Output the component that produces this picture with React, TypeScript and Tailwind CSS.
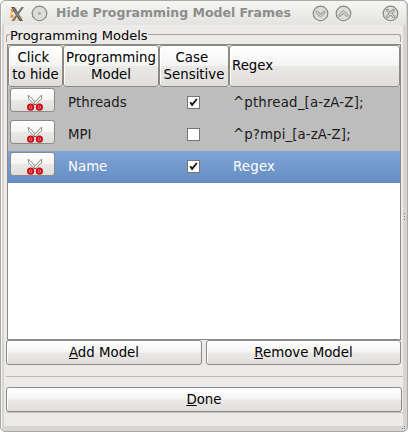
import type { ReactNode } from 'react';

const face = 'bg-[linear-gradient(#ffffff,#f4f4f3_49%,#eae9e8_51%,#dfdedc)]';

function RoundButton({ kind }: { kind: 'dot' | 'down' | 'up' | 'close' }) {
  return (
    <svg className="h-[17px] w-[17px] shrink-0" viewBox="0 0 17 17" fill="none">
      <circle cx="8.5" cy="9.1" r="7.3" stroke="#fff" strokeWidth="1.2" />
      <circle cx="8.5" cy="8.5" r="7.3" fill="#dddcda" stroke="#8b8b89" strokeWidth="1.3" />
      {kind === 'dot' && <circle cx="8.5" cy="8.5" r="1" fill="#ccc" stroke="#8c8c8a" strokeWidth=".9" />}
      {kind === 'down' && <Glyph d="M5 7.2l3.5 3.4L12 7.2" />}
      {kind === 'up' && <Glyph d="M5 10.2l3.5-3.4 3.5 3.4" />}
      {kind === 'close' && <Glyph d="M5.3 5.3l6.4 6.4M11.7 5.3l-6.4 6.4" />}
    </svg>
  );
}

function Glyph({ d }: { d: string }) {
  return (
    <>
      <path d={d} stroke="#8b8b89" strokeWidth="2.8" strokeLinecap="round" strokeLinejoin="round" />
      <path d={d} stroke="#dedddb" strokeWidth="1.2" strokeLinecap="round" strokeLinejoin="round" />
    </>
  );
}

function AppIcon() {
  return (
    <svg className="h-4 w-4 shrink-0" viewBox="0 0 16 16" fill="none">
      <path d="M3.5 12C.5 8 3 4 8 2.5" stroke="#f8c982" strokeWidth="2.4" />
      <path d="M5 14c4 .5 7-1 8-4" stroke="#f5d27d" strokeWidth="1.8" />
      <path d="M1.5 11l3-1.5M4 6L2 3.5" stroke="#ef962e" strokeWidth="2" />
      <path d="M2 1h3.5l8.5 14h-3.5z" fill="#55524f" />
      <path d="M12.5 1H15L5 15H2.5z" fill="#77726c" />
      <path d="M4 2l8 12" stroke="#a5a19c" strokeWidth=".8" />
    </svg>
  );
}

function Scissors() {
  return (
    <svg className="h-[17px] w-4 shrink-0" viewBox="0 0 16 17" fill="none">
      <path d="M1.4 1v3.6l6.2 6.2 1.6-1.7z" fill="#fafafa" stroke="#7d7d7b" strokeWidth=".9" />
      <path d="M14.6 1v3.6l-6.2 6.2-1.6-1.7z" fill="#fafafa" stroke="#7d7d7b" strokeWidth=".9" />
      <ellipse cx="3.6" cy="13.2" rx="2.6" ry="2.6" fill="#e39a9a" stroke="#cf1018" strokeWidth="2" />
      <ellipse cx="12.4" cy="13.2" rx="2.6" ry="2.6" fill="#e39a9a" stroke="#cf1018" strokeWidth="2" />
      <circle cx="3.6" cy="13.2" r=".9" fill="#b80c13" />
      <circle cx="12.4" cy="13.2" r=".9" fill="#b80c13" />
      <path d="M6 11.4l2-1.2 2 1.2" stroke="#bd1820" strokeWidth=".9" />
    </svg>
  );
}

function Check({ on }: { on: boolean }) {
  return (
    <span className="mb-px ml-[28px] flex h-[13px] w-[13px] border border-[#777571] bg-white">
      {on && (
        <svg className="h-[11px] w-[11px]" viewBox="0 0 11 11" fill="none">
          <path d="M2.2 5.3l1.9 2.6L8.8 2" stroke="#1a1a1a" strokeWidth="1.9" />
        </svg>
      )}
    </span>
  );
}

function Header({ children, left = false }: { children: ReactNode; left?: boolean }) {
  return (
    <div className={`flex items-center rounded-[3px] border border-[#8b8a87] pb-px leading-[17px] shadow-[inset_1px_1px_#fff] ${face} ${left ? 'pl-[2px]' : 'justify-center text-center'}`}>
      <span className="whitespace-nowrap">{children}</span>
    </div>
  );
}

function Push({ children, className = '' }: { children: ReactNode; className?: string }) {
  return (
    <button className={`flex h-[25px] items-center justify-center rounded-[3px] border border-[#8b8a87] shadow-[inset_1px_1px_#fff] ${face} ${className}`}>
      <span>{children}</span>
    </button>
  );
}

const rows = [
  { name: 'Pthreads', on: true, regex: '^pthread_[a-zA-Z];', selected: false, spacing: 'tracking-[0.17px]' },
  { name: 'MPI', on: false, regex: '^p?mpi_[a-zA-Z];', selected: false, spacing: 'tracking-[0.1px]' },
  { name: 'Name', on: true, regex: 'Regex', selected: true, spacing: 'tracking-[0.2px]' },
];

export default function App() {
  return (
    <div className="relative h-[432px] w-[408px] overflow-hidden rounded-[5px] border border-[#aaa9a8] bg-[#d6d5d4] font-['DejaVu_Sans',sans-serif] text-[13.33px] text-black shadow-[inset_1px_1px_#f5f5f4]">
      <header className="mx-px mt-px flex h-[23px] items-center rounded-t-[4px] bg-[linear-gradient(#f5f5f4,#e4e3e2)] pl-[7px]">
        <AppIcon />
        <div className="ml-[6px] flex"><RoundButton kind="dot" /></div>
        <h1 className="ml-[8px] w-[240px] whitespace-nowrap text-[12.5px] font-bold text-[#8d8d8b]">Hide Programming Model Frames</h1>
        <div className="ml-[16px] flex">
          <RoundButton kind="down" />
          <span className="ml-[6px] flex"><RoundButton kind="up" /></span>
          <span className="ml-[30px] flex"><RoundButton kind="close" /></span>
        </div>
      </header>
      <main className="ml-[3px] flex h-[401px] w-[399px] flex-col bg-[#ecebe9] pl-[2px]">
        <div className="flex h-[19px] items-center pt-px">
          <div className="mt-[6px] h-[8px] w-[4px] rounded-tl-[3px] border-l border-t border-[#a4a3a1]" />
          <div className="h-[19px] w-[138px] whitespace-nowrap text-[13px] leading-[20px]">Programming Models</div>
          <div className="mt-[6px] h-[8px] w-[253px] rounded-tr-[3px] border-r border-t border-[#a4a3a1]" />
        </div>
        <section className="ml-px h-[296px] w-[394px] border border-[#8b8a87] bg-white">
          <div className="grid h-[42px] grid-cols-[55px_96px_70px_171px] bg-[#dcdbd9]">
            <Header>Click&nbsp;<br />to hide</Header>
            <Header>Programming<br />Model</Header>
            <Header>Case&nbsp;<br />Sensitive</Header>
            <Header left>Regex</Header>
          </div>
          {rows.map((row) => (
            <div key={row.name} className={`grid h-8 grid-cols-[60px_91px_74px_167px] items-center ${row.selected ? 'bg-[linear-gradient(#80a4d6,#658ec3)] text-white' : 'bg-[#bdbdbd] text-[#1a1a1a]'}`}>
              <button className={`mb-[6px] ml-[2px] flex h-[24px] w-[45px] items-start justify-center rounded-[3px] border border-[#8b8a87] pl-[5px] pt-[5px] ${face}`}><Scissors /></button>
              <span>{row.name}</span>
              <Check on={row.on} />
              <span className={`whitespace-nowrap ${row.spacing}`}>{row.regex}</span>
            </div>
          ))}
        </section>
        <div className="flex gap-[4px]">
          <Push className="w-[196px]"><u>A</u>dd Model</Push>
          <Push className="w-[195px]"><u>R</u>emove Model</Push>
        </div>
        <div className="mt-[11px] h-px w-[397px] bg-[#b9b8b6]" />
        <Push className="mt-[10px] w-[396px]"><u>D</u>one</Push>
        <div className="h-px w-[397px] bg-[#c4c3c1]" />
      </main>
      <div className="absolute left-[403px] top-[212px] flex flex-col gap-[2px]">
        <i className="h-px w-px bg-[#777]" /><i className="h-px w-px bg-[#777]" /><i className="h-px w-px bg-[#777]" />
      </div>
      <svg className="absolute bottom-0 right-0 h-[6px] w-[6px]" viewBox="0 0 6 6"><path d="M1 3h1v1H1zM3 3h1v1H3zM3 1h1v1H3z" fill="#888" /></svg>
    </div>
  );
}
